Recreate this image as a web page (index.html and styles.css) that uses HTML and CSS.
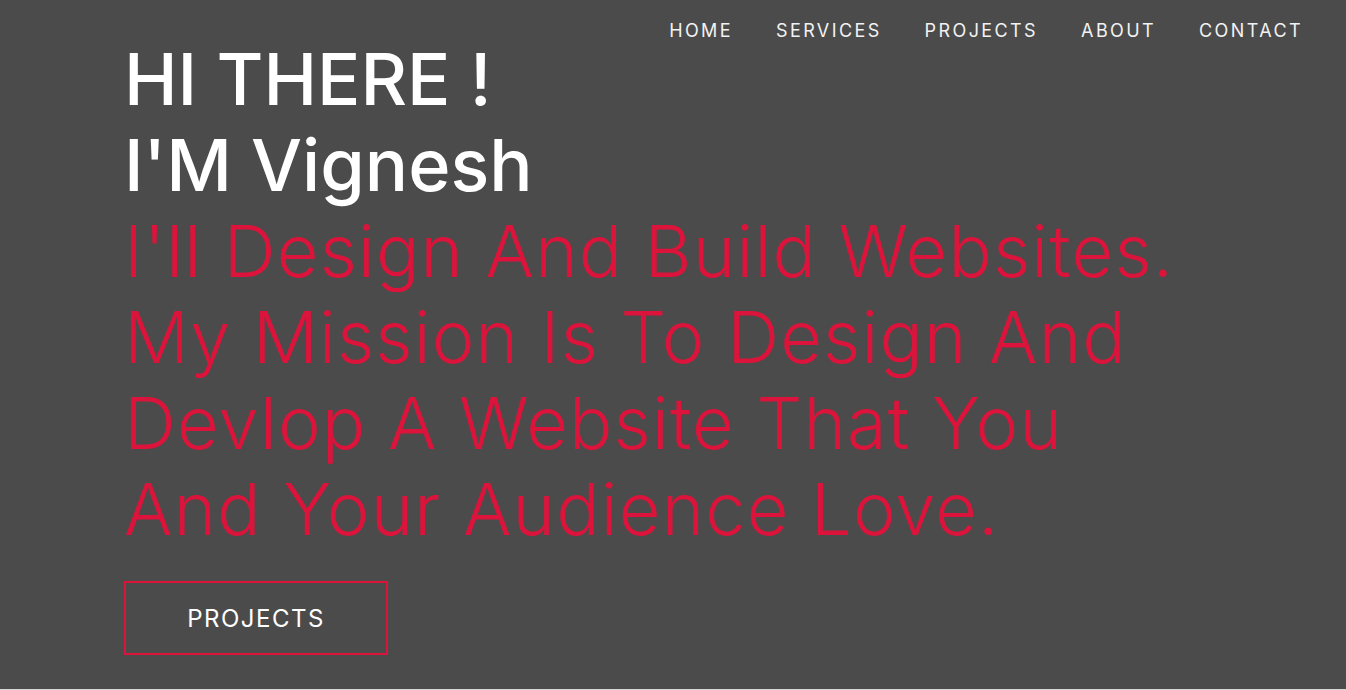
FILE: index.html
```html
<!DOCTYPE html>
<html lang="en">
<head>
<meta charset="utf-8">
<title>Vignesh</title>
<link rel="stylesheet" href="styles.css">
</head>
<body>
<section class="hero">
  <nav class="nav">
    <a href="#" class="nav-link">HOME</a>
    <a href="#" class="nav-link">SERVICES</a>
    <a href="#" class="nav-link">PROJECTS</a>
    <a href="#" class="nav-link">ABOUT</a>
    <a href="#" class="nav-link">CONTACT</a>
  </nav>
  <div class="intro">
    <h1 class="title">HI THERE !<br>I'M Vignesh</h1>
    <p class="mission">I'll Design And Build Websites.<br>My Mission Is To Design And<br>Devlop A Website That You<br>And Your Audience Love.</p>
    <a href="#" class="btn">PROJECTS</a>
  </div>
</section>
</body>
</html>
```
FILE: styles.css
```css
* { box-sizing: border-box; }
html, body { margin: 0; padding: 0; }
body {
  background: #d6d6d6;
  font-family: Inter, "Open Sans", sans-serif;
  overflow: hidden;
}
.hero {
  height: 689px;
  background: #4b4b4b;
  display: flex;
  flex-direction: column;
}
.nav {
  display: flex;
  justify-content: flex-end;
  gap: 43px;
  padding: 20px 43px 0 0;
  height: 44px;
}
.nav-link {
  color: #f2f2f2;
  text-decoration: none;
  font-size: 18px;
  letter-spacing: 2.4px;
  line-height: 22px;
}
.intro {
  padding-left: 124px;
  margin-top: -8px;
}
.title {
  margin: 0;
  color: #ffffff;
  font-weight: 500;
  font-size: 72px;
  line-height: 86px;
}
.mission {
  margin: 0;
  color: #dc143c;
  font-weight: 300;
  font-size: 72px;
  line-height: 86px;
  letter-spacing: 1.2px;
}
.btn {
  display: inline-flex;
  align-items: center;
  justify-content: center;
  margin-top: 29px;
  width: 264px;
  height: 74px;
  border: 2px solid #dc143c;
  color: #ffffff;
  text-decoration: none;
  font-size: 24px;
  letter-spacing: 1.5px;
}
```
